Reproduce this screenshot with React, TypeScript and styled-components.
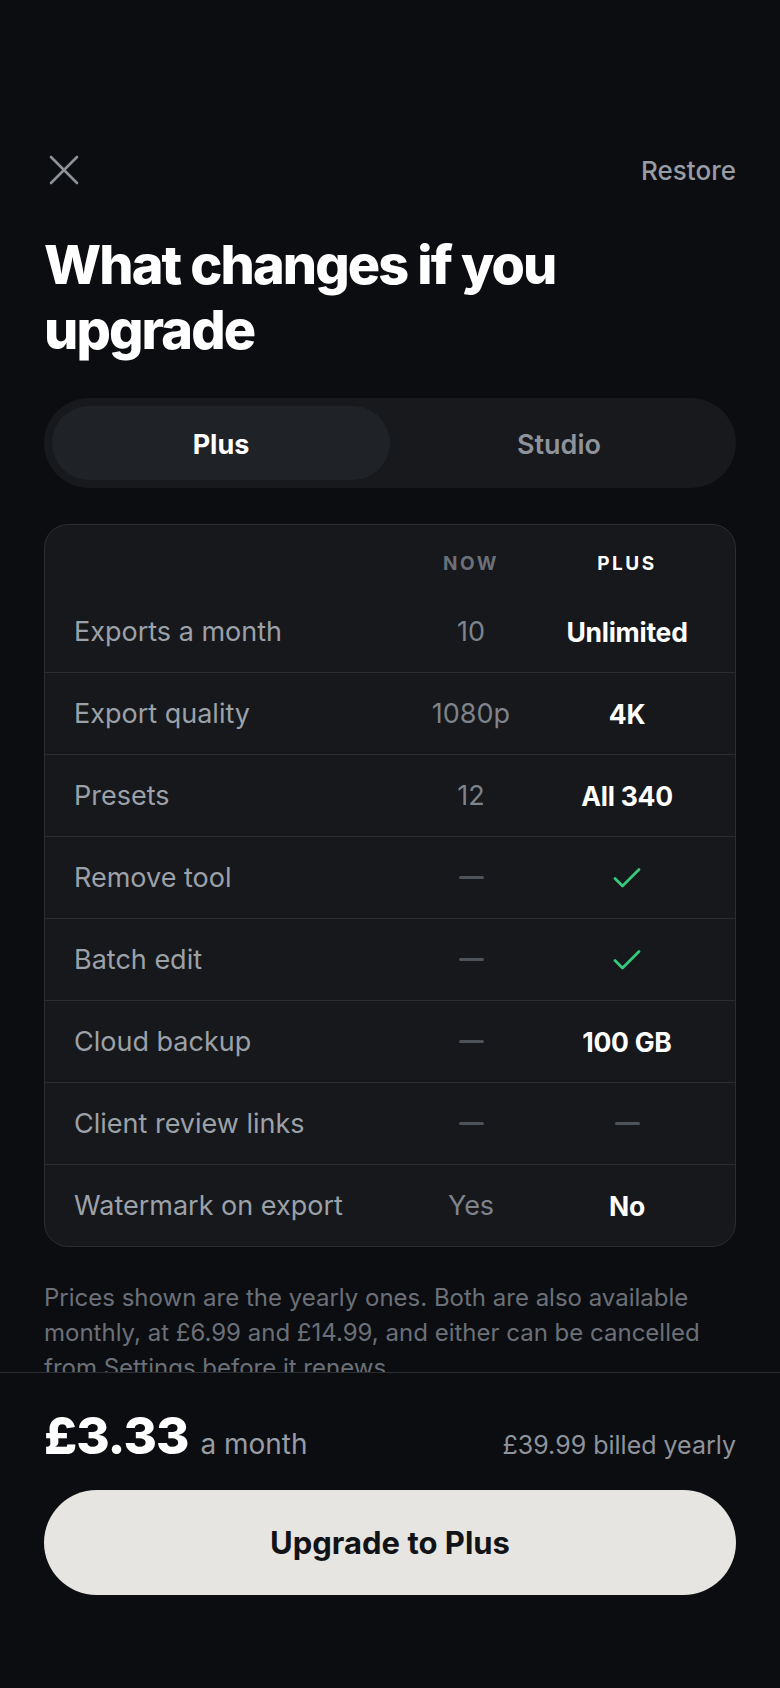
import styled, { createGlobalStyle } from 'styled-components';

type Cell = string | 'dash' | 'check';

type Feature = {
    label: string;
    now: Cell;
    plus: Cell;
}

const features: Feature[] = [
    { label: 'Exports a month', now: '10', plus: 'Unlimited' },
    { label: 'Export quality', now: '1080p', plus: '4K' },
    { label: 'Presets', now: '12', plus: 'All 340' },
    { label: 'Remove tool', now: 'dash', plus: 'check' },
    { label: 'Batch edit', now: 'dash', plus: 'check' },
    { label: 'Cloud backup', now: 'dash', plus: '100 GB' },
    { label: 'Client review links', now: 'dash', plus: 'dash' },
    { label: 'Watermark on export', now: 'Yes', plus: 'No' },
];

const CloseIcon = () => (
    <svg width="40" height="40" viewBox="0 0 40 40" fill="none">
        <path d="M7 7 33 33M33 7 7 33" stroke="#8d929a" strokeWidth="2.6" strokeLinecap="round" />
    </svg>
);

const CheckIcon = () => (
    <svg width="30" height="24" viewBox="0 0 30 24" fill="none">
        <path d="M3 12.5 10.5 20 27 3.5" stroke="#35c97c" strokeWidth="2.8" strokeLinecap="round" strokeLinejoin="round" />
    </svg>
);

const renderCell = (value: Cell, highlight: boolean) => {
    if (value === 'dash') return <Dash />;
    if (value === 'check') return <CheckIcon />;
    return <Value $highlight={highlight}>{value}</Value>;
};

export default function App() {
    return (
        <>
            <GlobalStyle />
            <Page>
                <TopBar>
                    <CloseButton aria-label="Close">
                        <CloseIcon />
                    </CloseButton>
                    <RestoreButton>Restore</RestoreButton>
                </TopBar>

                <Title>What changes if you upgrade</Title>

                <Segmented>
                    <Segment $active>Plus</Segment>
                    <Segment>Studio</Segment>
                </Segmented>

                <Card>
                    <HeaderRow>
                        <span />
                        <ColumnHead>NOW</ColumnHead>
                        <ColumnHead $highlight>PLUS</ColumnHead>
                    </HeaderRow>
                    {features.map((f, index) => (
                        <Row key={f.label} $first={index === 0}>
                            <Label>{f.label}</Label>
                            <CellBox>{renderCell(f.now, false)}</CellBox>
                            <CellBox>{renderCell(f.plus, true)}</CellBox>
                        </Row>
                    ))}
                </Card>

                <Footnote>
                    Prices shown are the yearly ones. Both are also available monthly, at £6.99 and
                    £14.99, and either can be cancelled from Settings before it renews.
                </Footnote>
            </Page>

            <Footer>
                <PriceRow>
                    <PriceMain>
                        <Price>£3.33</Price>
                        <Per>a month</Per>
                    </PriceMain>
                    <Billed>£39.99 billed yearly</Billed>
                </PriceRow>
                <UpgradeButton>Upgrade to Plus</UpgradeButton>
            </Footer>
        </>
    );
}

const GlobalStyle = createGlobalStyle`
    html, body {
        margin: 0;
        background: #0c0d10;
    }
    body {
        font-family: Inter, "Noto Sans", sans-serif;
        color: #fff;
        -webkit-font-smoothing: antialiased;
    }
    * { box-sizing: border-box; }
    button { font-family: inherit; }
`;

const Page = styled.main`
    padding: 150px 44px 340px;
    display: flex;
    flex-direction: column;
`;

const TopBar = styled.div`
    display: flex;
    align-items: center;
    justify-content: space-between;
    height: 40px;
`;

const CloseButton = styled.button`
    width: 40px;
    height: 40px;
    padding: 0;
    border: 0;
    background: none;
    display: flex;
`;

const RestoreButton = styled.button`
    border: 0;
    background: none;
    padding: 0;
    font-size: 26px;
    font-weight: 500;
    color: #979ca5;
`;

const Title = styled.h1`
    margin: 43px 0 0;
    font-size: 54px;
    line-height: 64.5px;
    font-weight: 800;
    letter-spacing: -0.035em;
    color: #fff;
    max-width: 560px;
`;

const Segmented = styled.div`
    margin-top: 36px;
    height: 90px;
    padding: 8px;
    border-radius: 45px;
    background: #17191c;
    display: grid;
    grid-template-columns: 1fr 1fr;
`;

const Segment = styled.button<{ $active?: boolean }>`
    border: 0;
    border-radius: 37px;
    padding-top: 3px;
    background: ${p => (p.$active ? '#1f2226' : 'transparent')};
    color: ${p => (p.$active ? '#ffffff' : '#8e939b')};
    font-size: 27px;
    font-weight: ${p => (p.$active ? 700 : 600)};
`;

const Card = styled.section`
    margin-top: 36px;
    border: 1px solid #2a2d32;
    border-radius: 24px;
    background: #16181b;
    overflow: hidden;
`;

const HeaderRow = styled.div`
    display: grid;
    grid-template-columns: 1fr 156px 156px;
    padding: 0 30px 16px 29px;
    height: 66px;
    align-items: end;
`;

const ColumnHead = styled.span<{ $highlight?: boolean }>`
    text-align: center;
    font-size: 19px;
    line-height: 22px;
    font-weight: 700;
    letter-spacing: 0.13em;
    color: ${p => (p.$highlight ? '#ffffff' : '#6b7079')};
`;

const Row = styled.div<{ $first?: boolean }>`
    display: grid;
    grid-template-columns: 1fr 156px 156px;
    align-items: center;
    padding: 0 30px 0 29px;
    height: ${p => (p.$first ? '81px' : '82px')};
    border-top: ${p => (p.$first ? 'none' : '1px solid #2a2d32')};
`;

const Label = styled.span`
    font-size: 27px;
    color: #9ca1a9;
`;

const CellBox = styled.div`
    display: flex;
    justify-content: center;
    align-items: center;
`;

const Value = styled.span<{ $highlight: boolean }>`
    font-size: ${p => (p.$highlight ? '26.5px' : '27px')};
    font-weight: ${p => (p.$highlight ? 700 : 400)};
    color: ${p => (p.$highlight ? '#ffffff' : '#7e838c')};
    letter-spacing: ${p => (p.$highlight ? '-0.01em' : '0')};
`;

const Dash = styled.span`
    width: 25px;
    height: 3px;
    border-radius: 2px;
    background: #4e5259;
`;

const Footnote = styled.p`
    margin: 33px 0 0;
    font-size: 24px;
    line-height: 35px;
    color: #6b7078;
`;

const Footer = styled.footer`
    position: fixed;
    left: 0;
    right: 0;
    bottom: 0;
    height: 316px;
    padding: 35px 44px 0;
    background: #0c0d10;
    border-top: 1px solid #2a2d32;
    display: flex;
    flex-direction: column;
    gap: 26px;
`;

const PriceRow = styled.div`
    display: flex;
    align-items: baseline;
    justify-content: space-between;
    height: 56px;
`;

const PriceMain = styled.div`
    display: flex;
    align-items: baseline;
    gap: 12px;
`;

const Price = styled.span`
    font-size: 51px;
    line-height: 56px;
    font-weight: 800;
    letter-spacing: -0.02em;
    color: #fff;
`;

const Per = styled.span`
    font-size: 28px;
    color: #979ca5;
`;

const Billed = styled.span`
    font-size: 25px;
    color: #8e939c;
`;

const UpgradeButton = styled.button`
    height: 105px;
    border: 0;
    border-radius: 53px;
    background: #e6e5e1;
    color: #121316;
    font-size: 31px;
    font-weight: 700;
`;
